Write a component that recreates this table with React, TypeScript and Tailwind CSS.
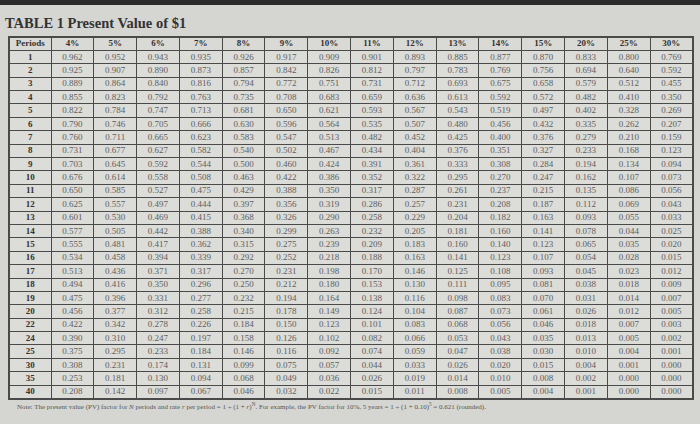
const rates = [4, 5, 6, 7, 8, 9, 10, 11, 12, 13, 14, 15, 20, 25, 30];
const periods = [1, 2, 3, 4, 5, 6, 7, 8, 9, 10, 11, 12, 13, 14, 15, 16, 17, 18, 19, 20, 22, 24, 25, 30, 35, 40];

function pv(rate: number, n: number) {
  const v = Math.pow(1 + rate / 100, -n);
  return (Math.round(v * 1000 + 1e-9) / 1000).toFixed(3);
}

export default function App() {
  return (
    <div
      className="w-[700px] h-[424px] overflow-hidden bg-[#d5d5d1] text-[#2a2a2a]"
      style={{ fontFamily: '"Liberation Serif", "Times New Roman", serif' }}
    >
      <div className="h-[5px] bg-[#2b2b2b]" />
      <div className="pl-[5px] pt-[11px] h-[31px] text-[14.5px] font-bold leading-none text-[#333]">
        TABLE 1 Present Value of $1
      </div>

      <table className="ml-[8px] w-[686px] table-fixed border-collapse border-2 border-[#4a4a4a] text-[9px] leading-none">
        <colgroup>
          <col className="w-[42px]" />
          {rates.map((r) => (
            <col key={r} />
          ))}
        </colgroup>
        <thead>
          <tr className="h-[13.4px] bg-[#d9d9d5]">
            <th className="border border-[#4a4a4a] font-bold text-[#333]">Periods</th>
            {rates.map((r) => (
              <th key={r} className="border border-[#4a4a4a] font-bold text-[#333]">
                {r}%
              </th>
            ))}
          </tr>
        </thead>
        <tbody>
          {periods.map((n) => (
            <tr key={n} className="h-[13.4px] bg-[#dcdcd8]">
              <td className="border border-[#4a4a4a] text-center font-bold text-[#333]">{n}</td>
              {rates.map((r) => (
                <td key={r} className="border border-[#4a4a4a] text-center text-[#606060]">
                  {pv(r, n)}
                </td>
              ))}
            </tr>
          ))}
        </tbody>
      </table>

      <div className="pl-[17px] pt-[4px] text-[7px] leading-none text-[#555]">
        Note: The present value (PV) factor for <i>N</i> periods and rate <i>r</i> per period = 1 ÷ (1 + <i>r</i>)
        <sup>N</sup>. For example, the PV factor for 10%, 5 years = 1 ÷ (1 + 0.10)<sup>5</sup> = 0.621 (rounded).
      </div>
    </div>
  );
}
